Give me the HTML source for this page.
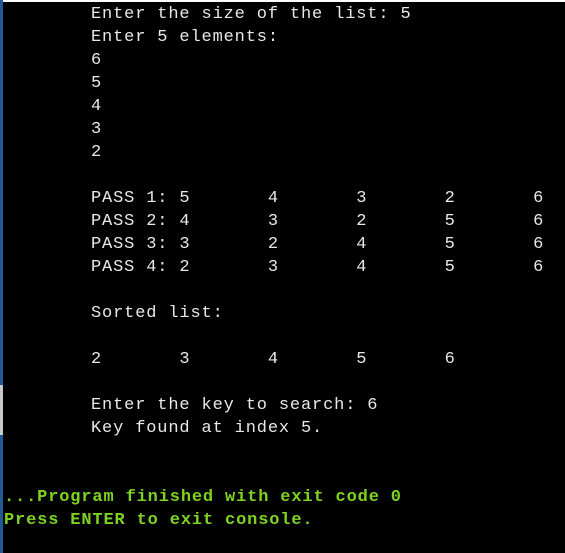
<!DOCTYPE html>
<html><head><style>
html,body{margin:0;padding:0;background:#000;width:565px;height:553px;overflow:hidden;}
.top{position:absolute;left:0;top:0;width:565px;height:2px;background:#fff;}
.left{position:absolute;left:0;top:0;width:3px;height:553px;background:#1f5a96;}
.lg{position:absolute;left:0;top:385px;width:3px;height:50px;background:#c8c8c8;}
pre{position:absolute;margin:0;font-family:"Liberation Mono",monospace;font-size:17px;letter-spacing:0.85px;line-height:23px;color:#e8e8e8;tab-size:8;-moz-tab-size:8;white-space:pre;}
.w{left:91px;top:3px;}
.g{left:4px;top:486px;color:#7ed321;font-weight:bold;}
</style></head><body>
<div class="top"></div><div class="left"></div><div class="lg"></div>
<pre class="w">Enter the size of the list: 5
Enter 5 elements:
6
5
4
3
2

PASS 1: 5	4	3	2	6
PASS 2: 4	3	2	5	6
PASS 3: 3	2	4	5	6
PASS 4: 2	3	4	5	6

Sorted list:

2	3	4	5	6

Enter the key to search: 6
Key found at index 5.</pre>
<pre class="g">...Program finished with exit code 0
Press ENTER to exit console.</pre>
</body></html>
